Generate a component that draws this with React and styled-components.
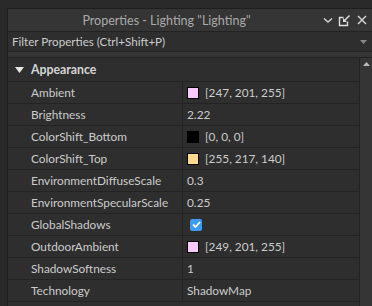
import React from "react";
import styled, { createGlobalStyle } from "styled-components";

const Global = createGlobalStyle`
  html, body { margin: 0; padding: 0; background: #2a2a2a; }
  body { font-family: Lato, "Noto Sans", sans-serif; }
`;

const Screen = styled.div`
  width: 372px;
  height: 306px;
  overflow: hidden;
  background: #2a2a2a;
  padding: 8px 0 0 7px;
  box-sizing: border-box;
`;

const Panel = styled.div`
  height: 100%;
  display: flex;
  flex-direction: column;
  background: #353535;
  border-left: 1px solid #1e1e1e;
  border-top: 1px solid #1e1e1e;
`;

const TitleBar = styled.div`
  height: 22px;
  display: flex;
  align-items: center;
  background: #353535;
  border-bottom: 1px solid #222;
`;

const Title = styled.div`
  flex: 1;
  text-align: center;
  color: #aaaaaa;
  font-size: 12.5px;
  padding-left: 4px;
  padding-top: 1px;
`;

const TitleIcons = styled.div`
  display: flex;
  align-items: center;
  gap: 4px;
  padding-right: 4px;
`;

const IconBox = styled.div`
  width: 13px;
  height: 13px;
  display: flex;
  align-items: center;
  justify-content: center;
`;

const FilterBar = styled.div`
  height: 19px;
  display: flex;
  align-items: center;
  justify-content: space-between;
  background: #2e2e2e;
  border-bottom: 1px solid #222;
  padding: 0 5px 0 4px;
  color: #cccccc;
  font-size: 11.6px;
`;

const Spacer = styled.div`
  height: 5px;
  background: #353535;
  border-bottom: 1px solid #222;
`;

const Body = styled.div`
  flex: 1;
  display: flex;
  min-height: 0;
`;

const Table = styled.div`
  flex: 1;
  background: #2e2e2e;
  display: flex;
  flex-direction: column;
`;

const Scrollbar = styled.div`
  width: 12px;
  background: #353535;
  border-left: 1px solid #222;
  display: flex;
  justify-content: center;
  padding-top: 4px;
`;

const HeaderRow = styled.div`
  height: 23px;
  display: flex;
  align-items: center;
  border-bottom: 1px solid #232323;
  color: #d6d6d6;
  font-weight: bold;
  font-size: 12.3px;
`;

const Arrow = styled.div`
  width: 23px;
  display: flex;
  justify-content: center;
`;

const Row = styled.div`
  height: 21px;
  display: grid;
  grid-template-columns: 175px 1fr;
  border-bottom: 1px solid #232323;
  font-size: 11.8px;
  color: #cccccc;
`;

const NameCell = styled.div`
  display: flex;
  align-items: center;
  padding-left: 23px;
  border-right: 1px solid #232323;
`;

const ValueCell = styled.div`
  display: flex;
  align-items: center;
  padding-left: 4px;
  gap: 6px;
`;

const Swatch = styled.div`
  width: 10px;
  height: 10px;
  border: 1px solid #000;
  background: ${(p) => p.$c};
`;

const Check = styled.div`
  width: 12px;
  height: 12px;
  border-radius: 2px;
  background: #3b9cf5;
  display: flex;
  align-items: center;
  justify-content: center;
  margin-left: 3px;
`;

const rows = [
  { name: "Ambient", color: "rgb(247,201,255)", value: "[247, 201, 255]" },
  { name: "Brightness", value: "2.22" },
  { name: "ColorShift_Bottom", color: "rgb(0,0,0)", value: "[0, 0, 0]" },
  { name: "ColorShift_Top", color: "rgb(255,217,140)", value: "[255, 217, 140]" },
  { name: "EnvironmentDiffuseScale", value: "0.3" },
  { name: "EnvironmentSpecularScale", value: "0.25" },
  { name: "GlobalShadows", check: true },
  { name: "OutdoorAmbient", color: "rgb(249,201,255)", value: "[249, 201, 255]" },
  { name: "ShadowSoftness", value: "1" },
  { name: "Technology", value: "ShadowMap" },
];

export default function App() {
  return (
    <>
      <Global />
      <Screen>
        <Panel>
          <TitleBar>
            <Title>Properties - Lighting "Lighting"</Title>
            <TitleIcons>
              <IconBox>
                <svg width="10" height="7" viewBox="0 0 10 7">
                  <path d="M1 1.5 L5 5 L9 1.5" stroke="#cfcfcf" strokeWidth="1.6" fill="none" />
                </svg>
              </IconBox>
              <IconBox>
                <svg width="13" height="13" viewBox="0 0 13 13">
                  <path d="M5.5 3.5 H1.5 V11.5 H9.5 V7.5" stroke="#e0e0e0" strokeWidth="1.4" fill="none" />
                  <path d="M11.5 1.5 L6 7" stroke="#e0e0e0" strokeWidth="1.4" />
                  <path d="M5 4 V8 H9 Z" fill="#e0e0e0" />
                </svg>
              </IconBox>
              <IconBox>
                <svg width="10" height="10" viewBox="0 0 10 10">
                  <path d="M1 1 L9 9 M9 1 L1 9" stroke="#d0d0d0" strokeWidth="1.5" />
                </svg>
              </IconBox>
            </TitleIcons>
          </TitleBar>
          <FilterBar>
            <span>Filter Properties (Ctrl+Shift+P)</span>
            <svg width="7" height="4" viewBox="0 0 7 4">
              <path d="M0 0 H7 L3.5 4 Z" fill="#888" />
            </svg>
          </FilterBar>
          <Spacer />
          <Body>
            <Table>
              <HeaderRow>
                <Arrow>
                  <svg width="9" height="6" viewBox="0 0 9 6">
                    <path d="M0 0 H9 L4.5 6 Z" fill="#e6e6e6" />
                  </svg>
                </Arrow>
                Appearance
              </HeaderRow>
              {rows.map((r) => (
                <Row key={r.name}>
                  <NameCell>{r.name}</NameCell>
                  <ValueCell>
                    {r.color && <Swatch $c={r.color} />}
                    {r.check ? (
                      <Check>
                        <svg width="9" height="7" viewBox="0 0 9 7">
                          <path d="M1 3.5 L3.5 6 L8 1" stroke="#fff" strokeWidth="1.8" fill="none" />
                        </svg>
                      </Check>
                    ) : (
                      <span>{r.value}</span>
                    )}
                  </ValueCell>
                </Row>
              ))}
            </Table>
            <Scrollbar>
              <svg width="7" height="4" viewBox="0 0 7 4">
                <path d="M3.5 0 L7 4 H0 Z" fill="#bbb" />
              </svg>
            </Scrollbar>
          </Body>
        </Panel>
      </Screen>
    </>
  );
}
